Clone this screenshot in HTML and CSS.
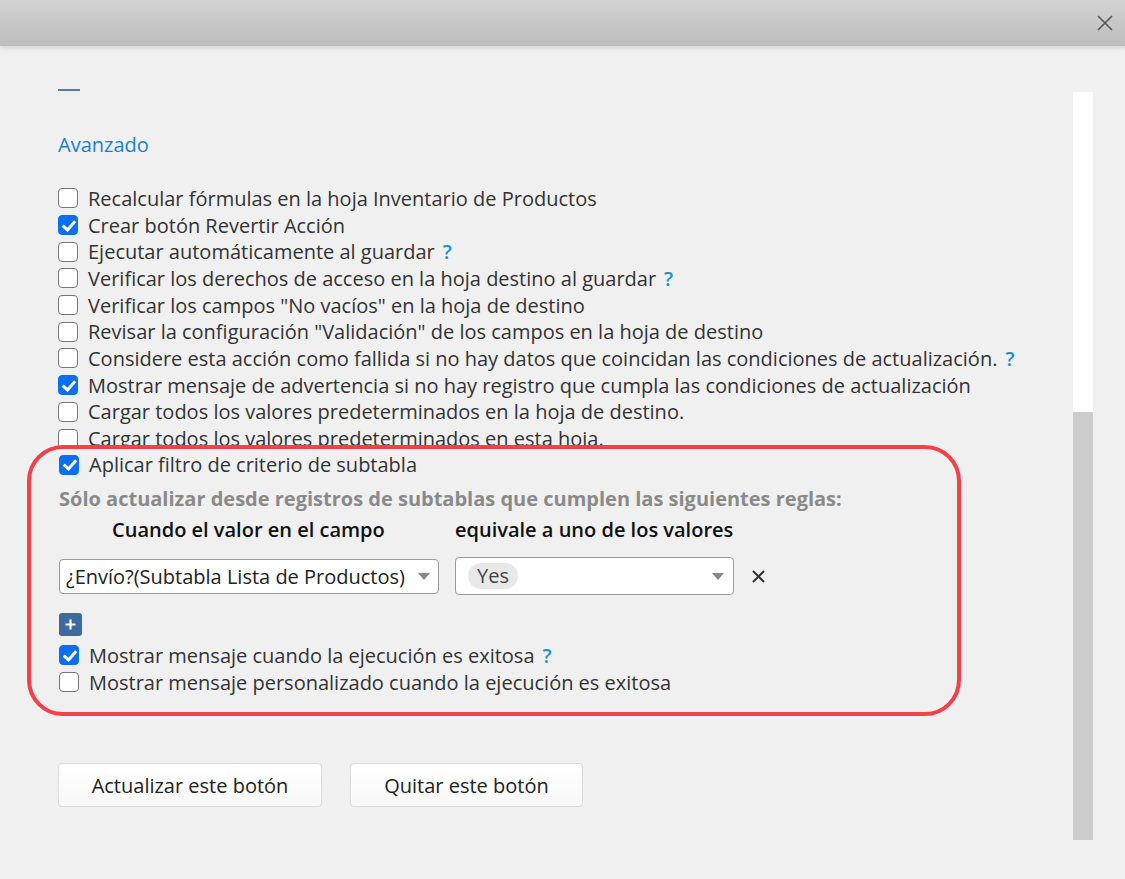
FILE: index.html
```html
<!DOCTYPE html>
<html lang="es">
<head>
    <meta charset="UTF-8">
    <title>Avanzado</title>
    <link rel="stylesheet" href="styles.css">
</head>
<body>
    <div class="topbar">
        <svg class="close" width="16" height="16" viewBox="0 0 16 16">
            <path d="M1 1 L15 15 M15 1 L1 15" stroke="#555" stroke-width="1.6" fill="none"/>
        </svg>
    </div>
    <div class="main">
        <div class="content">
            <div class="dash"></div>
            <div class="section-title">Avanzado</div>

            <div class="checks">
                <label class="row"><span class="box"></span>Recalcular fórmulas en la hoja Inventario de Productos</label>
                <label class="row"><span class="box checked"></span>Crear botón Revertir Acción</label>
                <label class="row"><span class="box"></span>Ejecutar automáticamente al guardar <span class="help">?</span></label>
                <label class="row"><span class="box"></span>Verificar los derechos de acceso en la hoja destino al guardar <span class="help">?</span></label>
                <label class="row"><span class="box"></span>Verificar los campos "No vacíos" en la hoja de destino</label>
                <label class="row"><span class="box"></span>Revisar la configuración "Validación" de los campos en la hoja de destino</label>
                <label class="row"><span class="box"></span>Considere esta acción como fallida si no hay datos que coincidan las condiciones de actualización. <span class="help">?</span></label>
                <label class="row"><span class="box checked"></span>Mostrar mensaje de advertencia si no hay registro que cumpla las condiciones de actualización</label>
                <label class="row"><span class="box"></span>Cargar todos los valores predeterminados en la hoja de destino.</label>
                <label class="row"><span class="box"></span>Cargar todos los valores predeterminados en esta hoja.</label>
            </div>

            <div class="highlight">
                <label class="row"><span class="box checked"></span>Aplicar filtro de criterio de subtabla</label>
                <div class="rule-note">Sólo actualizar desde registros de subtablas que cumplen las siguientes reglas:</div>
                <div class="rule-head">
                    <span class="col-field">Cuando el valor en el campo</span>
                    <span class="col-value">equivale a uno de los valores</span>
                </div>
                <div class="rule-row">
                    <div class="select field-select">
                        <span>¿Envío?(Subtabla Lista de Productos)</span>
                        <span class="caret"></span>
                    </div>
                    <div class="select value-select">
                        <span class="chip">Yes</span>
                        <span class="caret"></span>
                    </div>
                    <svg class="remove" width="13" height="13" viewBox="0 0 13 13">
                        <path d="M1 1 L12 12 M12 1 L1 12" stroke="#333" stroke-width="2" fill="none"/>
                    </svg>
                </div>
                <div class="add-btn">
                    <svg width="11" height="11" viewBox="0 0 11 11">
                        <path d="M5.5 0.5 V10.5 M0.5 5.5 H10.5" stroke="#fff" stroke-width="2.2" fill="none"/>
                    </svg>
                </div>
                <label class="row"><span class="box checked"></span>Mostrar mensaje cuando la ejecución es exitosa <span class="help">?</span></label>
                <label class="row"><span class="box"></span>Mostrar mensaje personalizado cuando la ejecución es exitosa</label>
            </div>

            <div class="actions">
                <button class="btn btn-update">Actualizar este botón</button>
                <button class="btn btn-remove">Quitar este botón</button>
            </div>
        </div>
        <div class="scrollbar">
            <div class="track"></div>
            <div class="thumb"></div>
        </div>
    </div>
</body>
</html>
```

FILE: styles.css
```css
body {
    margin: 0;
    background-color: #f0f0f0;
    font-family: 'Open Sans', 'Noto Sans', sans-serif;
    color: #333333;
    height: 879px;
    overflow: hidden;
}
.topbar {
    height: 46px;
    background: linear-gradient(#d2d2d2, #bdbdbd);
    box-shadow: 0 2px 4px rgba(0, 0, 0, 0.12);
    display: flex;
    justify-content: flex-end;
    align-items: center;
    padding-right: 12px;
}
.main {
    display: flex;
    padding-left: 58px;
}
.content {
    flex: 1;
}
.dash {
    width: 22px;
    height: 2px;
    background: #4f7db3;
    margin-top: 43px;
}
.section-title {
    margin-top: 41px;
    color: #1a7fd4;
    font-size: 20px;
    line-height: 26px;
    height: 26px;
}
.checks {
    margin-top: 27px;
}
.row {
    display: flex;
    align-items: center;
    height: 26.7px;
    font-size: 20px;
    white-space: nowrap;
}
.box {
    flex: none;
    width: 18px;
    height: 18px;
    border: 1.5px solid #767676;
    border-radius: 4px;
    background: #fff;
    margin: 0 10px 0 0;
    position: relative;
}
.box.checked {
    background: #0a6ff0;
    border-color: #0a6ff0;
}
.box.checked::after {
    content: "";
    position: absolute;
    left: 5.5px;
    top: 1.5px;
    width: 5px;
    height: 10px;
    border: solid #fff;
    border-width: 0 3px 3px 0;
    transform: rotate(42deg);
}
.help {
    color: #1a8fd8;
    font-weight: 600;
    margin-left: 8px;
}
.highlight {
    position: relative;
    background: #f0f0f0;
    width: 870px;
    margin: -6.5px 0 0 -31px;
    padding: 2px 28px 17px 28px;
    border: 4px solid #f4404a;
    border-radius: 36px;
}
.rule-note {
    margin-top: 8px;
    font-size: 20px;
    font-weight: 700;
    color: #8a8a8a;
    line-height: 26px;
    white-space: nowrap;
}
.rule-head {
    display: flex;
    margin-top: 5px;
    font-size: 20px;
    font-weight: 600;
    color: #111;
    line-height: 26px;
}
.col-field {
    width: 396px;
    padding-left: 53px;
    box-sizing: border-box;
}
.rule-row {
    display: flex;
    align-items: center;
    margin-top: 14px;
}
.select {
    display: flex;
    align-items: center;
    justify-content: space-between;
    background: #fff;
    border: 1px solid #9a9a9a;
    border-radius: 4px;
    box-sizing: border-box;
    font-size: 20px;
    color: #222;
}
.field-select {
    width: 380px;
    height: 35px;
    padding: 0 8px 0 6px;
}
.value-select {
    width: 279px;
    height: 38px;
    margin-left: 16px;
    padding: 0 9px 0 12px;
}
.caret {
    width: 0;
    height: 0;
    border-left: 6px solid transparent;
    border-right: 6px solid transparent;
    border-top: 7px solid #888;
}
.chip {
    background: #e8e8e8;
    border-radius: 13px;
    padding: 1px 9px;
    color: #444;
    line-height: 24px;
}
.remove {
    margin-left: 18px;
}
.add-btn {
    margin-top: 18px;
    width: 23px;
    height: 23px;
    background: #3c6aa0;
    border-radius: 3px;
    display: flex;
    align-items: center;
    justify-content: center;
    margin-bottom: 6px;
}
.actions {
    display: flex;
    gap: 28px;
    margin-top: 47px;
}
.btn {
    height: 44px;
    background: linear-gradient(#ffffff, #f8f8f8);
    border: 1px solid #dcdcdc;
    border-radius: 4px;
    font-family: 'Open Sans', sans-serif;
    font-size: 20px;
    color: #222;
}
.btn-update {
    width: 264px;
}
.btn-remove {
    width: 233px;
}
.scrollbar {
    flex: none;
    width: 20px;
    margin: 46px 32px 0 0;
    display: flex;
    flex-direction: column;
}
.track {
    height: 320px;
    background: #ffffff;
}
.thumb {
    height: 428px;
    background: #cccccc;
}
```
